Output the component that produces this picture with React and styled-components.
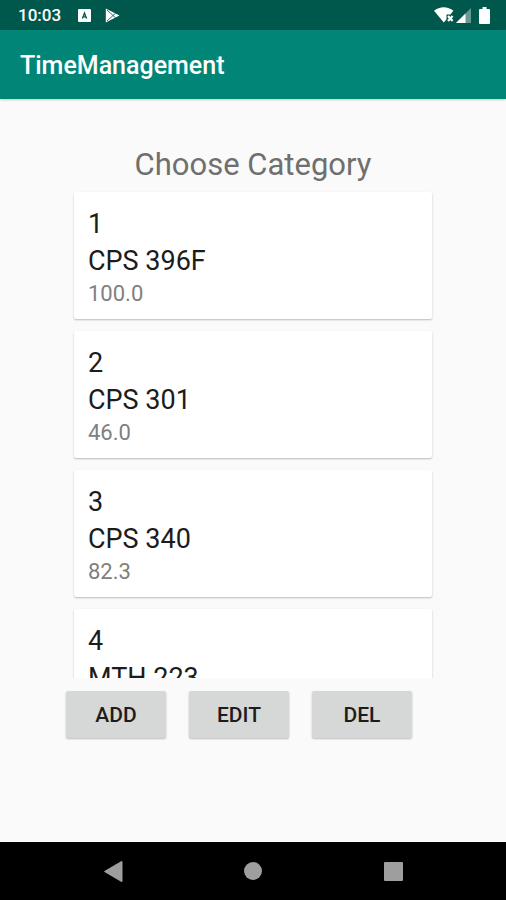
import React from "react";
import styled, { createGlobalStyle } from "styled-components";

const GlobalStyle = createGlobalStyle`
  *, *::before, *::after { box-sizing: border-box; }
  body {
    margin: 0;
    background: #fafafa;
    font-family: Roboto, "Liberation Sans", sans-serif;
  }
`;

const Screen = styled.div`
  display: flex;
  flex-direction: column;
  height: 100vh;
  background: #fafafa;
`;

const StatusBar = styled.div`
  display: flex;
  flex: none;
  align-items: center;
  justify-content: space-between;
  height: 30px;
  padding: 0 16px 0 18px;
  background: #00574b;
  color: #fff;
`;

const StatusGroup = styled.div`
  display: flex;
  align-items: center;
  gap: ${(p) => p.$gap}px;
`;

const Clock = styled.span`
  font-size: 17px;
  font-weight: 500;
  line-height: 20px;
`;

const AppBar = styled.header`
  display: flex;
  flex: none;
  align-items: center;
  height: 69px;
  padding: 3px 20px 0;
  background: #008577;
  box-shadow: 0 1px 2px rgba(0, 0, 0, 0.2);
`;

const AppTitle = styled.h1`
  margin: 0;
  color: #fff;
  font-size: 25px;
  font-weight: 500;
  line-height: 32px;
`;

const Content = styled.main`
  display: flex;
  flex: 1;
  flex-direction: column;
  min-height: 0;
  padding: 44px 0 104px;
`;

const Heading = styled.h2`
  flex: none;
  margin: 0;
  color: #6f6f6f;
  font-size: 31px;
  font-weight: 400;
  line-height: 44px;
  text-align: center;
`;

const CategoryList = styled.ul`
  display: flex;
  flex: 1;
  flex-direction: column;
  gap: 12px;
  min-height: 0;
  margin: 0;
  padding: 5px 74px 0;
  overflow: hidden;
  list-style: none;
`;

const Card = styled.li`
  flex: none;
  padding: 14px 14px 11px;
  border-radius: 2px;
  background: #fff;
  box-shadow: 0 1px 2px rgba(0, 0, 0, 0.26);
`;

const CardText = styled.div`
  color: #1c1c1c;
  font-size: 27px;
  line-height: 37px;
`;

const CardScore = styled.div`
  color: #808080;
  font-size: 22px;
  line-height: 28px;
`;

const Actions = styled.div`
  display: flex;
  flex: none;
  gap: 23px;
  padding: 13px 94px 0 66px;
`;

const ActionButton = styled.button`
  flex: 1;
  height: 47px;
  padding: 0;
  border: 0;
  border-radius: 2px;
  background: #d6d7d7;
  box-shadow: 0 1px 2px rgba(0, 0, 0, 0.25);
  color: #1c1c1c;
  font: 500 21px/28px Roboto, "Liberation Sans", sans-serif;
`;

const NavBar = styled.nav`
  display: flex;
  flex: none;
  align-items: center;
  justify-content: center;
  gap: 100px;
  height: 58px;
  background: #000;
`;

const NavButton = styled.button`
  display: grid;
  width: 40px;
  height: 40px;
  padding: 0;
  place-items: center;
  border: 0;
  background: none;
  color: #9e9e9e;
`;

const Icon = styled.svg`
  display: block;
  flex: none;
  fill: currentColor;
`;

const categories = [
  { id: 1, name: "CPS 396F", score: "100.0" },
  { id: 2, name: "CPS 301", score: "46.0" },
  { id: 3, name: "CPS 340", score: "82.3" },
  { id: 4, name: "MTH 223" },
];

function NoticeIcon() {
  return (
    <Icon width="13" height="13" viewBox="0 0 13 13" aria-hidden="true">
      <rect width="13" height="13" rx="1" />
      <path d="M4.4 9.4 6.5 4l2.1 5.4M5.2 7.8h2.6" fill="none" stroke="#00574b" strokeWidth="1.3" />
    </Icon>
  );
}

function PlayIcon() {
  return (
    <Icon width="15" height="15" viewBox="0 0 15 15" aria-hidden="true">
      <path d="M.8.5 14.5 7.5.8 14.5z" />
      <path d="M2 2 10.8 10M2 13 10.8 5" fill="none" stroke="#00574b" strokeWidth=".8" />
    </Icon>
  );
}

function WifiIcon() {
  return (
    <Icon width="20" height="16" viewBox="0 0 20 16" aria-hidden="true">
      <path d="M0 3.8C5.5-.9 14-.9 19.4 3.8L16.4 7.5H12.5V12.2L9.8 15.5z" />
      <path d="m14 9 4.6 5M18.6 9 14 14" fill="none" stroke="currentColor" strokeWidth="2.2" />
    </Icon>
  );
}

function SignalIcon() {
  return (
    <Icon width="15" height="15" viewBox="0 0 15 15" aria-hidden="true">
      <path d="M15 0v15H0z" opacity=".4" />
      <path d="M9.5 5.5V15H0z" />
    </Icon>
  );
}

function BatteryIcon() {
  return (
    <Icon width="11" height="17" viewBox="0 0 11 17" aria-hidden="true">
      <path d="M3.5 0h4v2H10q1 0 1 1v13q0 1-1 1H1q-1 0-1-1V3q0-1 1-1h2.5z" />
    </Icon>
  );
}

export default function App() {
  return (
    <Screen>
      <GlobalStyle />
      <StatusBar>
        <StatusGroup $gap={17}>
          <Clock>10:03</Clock>
          <StatusGroup $gap={14}>
            <NoticeIcon />
            <PlayIcon />
          </StatusGroup>
        </StatusGroup>
        <StatusGroup $gap={2}>
          <WifiIcon />
          <StatusGroup $gap={8}>
            <SignalIcon />
            <BatteryIcon />
          </StatusGroup>
        </StatusGroup>
      </StatusBar>
      <AppBar>
        <AppTitle>TimeManagement</AppTitle>
      </AppBar>
      <Content>
        <Heading>Choose Category</Heading>
        <CategoryList>
          {categories.map((category) => (
            <Card key={category.id}>
              <CardText>{category.id}</CardText>
              <CardText>{category.name}</CardText>
              {category.score && <CardScore>{category.score}</CardScore>}
            </Card>
          ))}
        </CategoryList>
        <Actions>
          <ActionButton type="button">ADD</ActionButton>
          <ActionButton type="button">EDIT</ActionButton>
          <ActionButton type="button">DEL</ActionButton>
        </Actions>
      </Content>
      <NavBar aria-label="System">
        <NavButton type="button" aria-label="Back">
          <Icon width="19" height="21" viewBox="0 0 19 21">
            <path d="M17.5 0q1 0 1 1v19q0 1-1 1L.5 11q-.6-.5 0-1z" />
          </Icon>
        </NavButton>
        <NavButton type="button" aria-label="Home">
          <Icon width="18" height="18" viewBox="0 0 18 18">
            <circle cx="9" cy="9" r="9" />
          </Icon>
        </NavButton>
        <NavButton type="button" aria-label="Recent apps">
          <Icon width="19" height="19" viewBox="0 0 19 19">
            <rect width="19" height="19" rx="1" />
          </Icon>
        </NavButton>
      </NavBar>
    </Screen>
  );
}
